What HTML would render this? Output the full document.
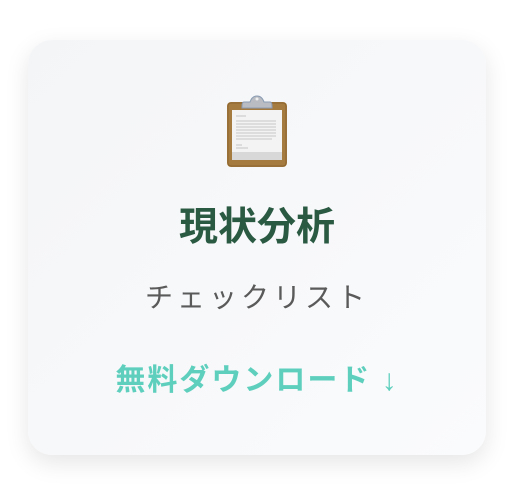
<!DOCTYPE html>
<html><head><meta charset="utf-8"><style>
html,body{margin:0;padding:0;width:514px;height:496px;background:#fff;overflow:hidden}
.card{position:absolute;left:28px;top:40px;width:458px;height:415px;border-radius:24px;background:linear-gradient(135deg,#f4f5f7,#fafbfc);box-shadow:0 8px 24px rgba(0,0,0,0.10)}
.t{position:absolute;left:0;width:514px;text-align:center;font-family:"Liberation Sans","Noto Sans CJK JP",sans-serif;white-space:nowrap}
.h{top:204px;font-size:39px;font-weight:bold;color:#2b5a43;line-height:48px}
.s{top:280px;font-size:28px;letter-spacing:4px;color:#5a5a5a;line-height:36px;padding-right:4px}
.d{top:362px;font-size:30px;font-weight:bold;color:#5ecfbd;line-height:38px;letter-spacing:2px}
</style></head><body>
<div class="card"></div>
<svg style="position:absolute;left:224px;top:94px" width="66" height="76" viewBox="0 0 66 76">
<rect x="3" y="8" width="60" height="65" rx="4" fill="#a57b3f"/>
<rect x="4" y="9" width="58" height="63" rx="3" fill="none" stroke="#8d652f" stroke-width="1"/>
<rect x="8" y="16" width="50" height="50" fill="#f3f3f3"/>
<rect x="8" y="58" width="50" height="8" fill="#d8d8d8"/>
<g stroke="#b8b8b8" stroke-width="0.8">
<line x1="12" y1="22" x2="22" y2="22"/>
<line x1="12" y1="27" x2="52" y2="27"/><line x1="12" y1="30" x2="52" y2="30"/>
<line x1="12" y1="33" x2="52" y2="33"/><line x1="12" y1="36" x2="52" y2="36"/>
<line x1="12" y1="39" x2="52" y2="39"/><line x1="12" y1="42" x2="52" y2="42"/>
<line x1="12" y1="45" x2="48" y2="45"/><line x1="12" y1="51" x2="18" y2="51"/>
<line x1="12" y1="54" x2="24" y2="54"/></g>
<path d="M20 8 L26 8 Q28 2 33 2 Q38 2 40 8 L46 8 Q48 8 48 12 L48 14 L18 14 L18 12 Q18 8 20 8Z" fill="#b9bcc2" stroke="#8a9bb3" stroke-width="1"/>
<circle cx="33" cy="5" r="1.5" fill="#eee"/>
</svg>
<div class="t h">現状分析</div>
<div class="t s">チェックリスト</div>
<div class="t d">無料ダウンロード ↓</div>
</body></html>
